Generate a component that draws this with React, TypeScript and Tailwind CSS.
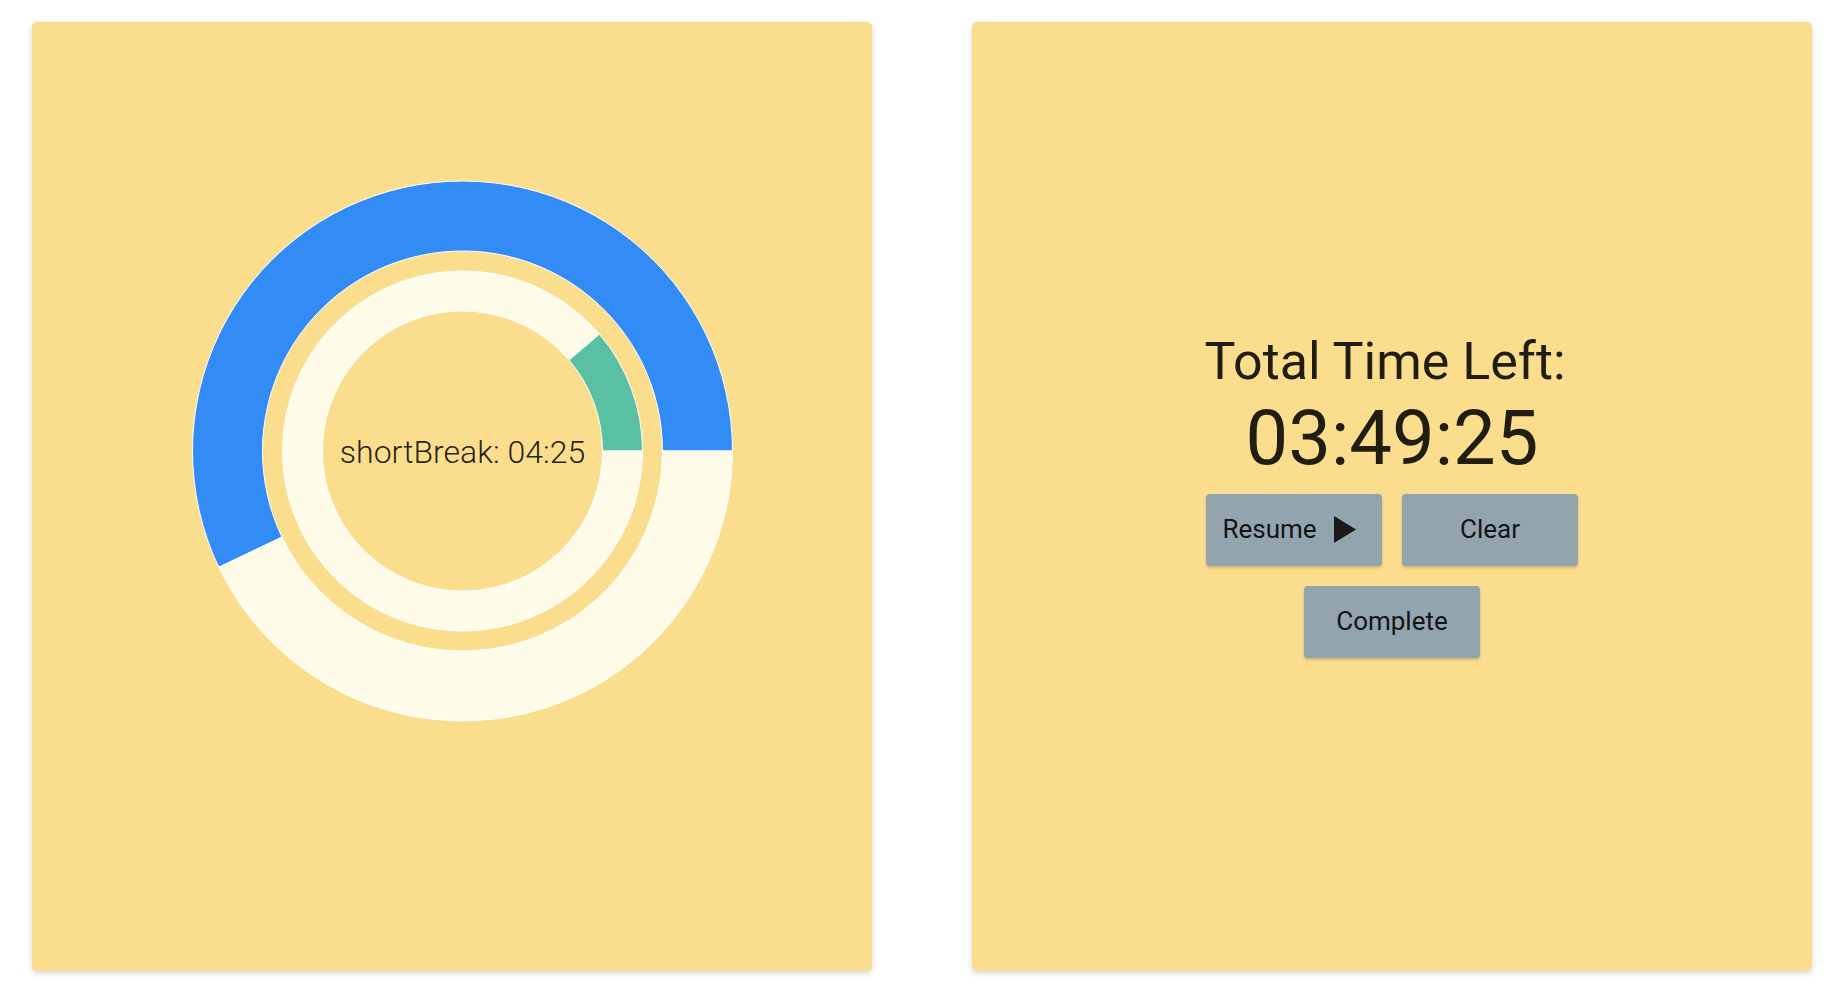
import React from 'react';

const CX = 430.5;
const CY = 429;

// annulus sector, angles in degrees counter-clockwise from 3 o'clock
function sectorPath(r0: number, r1: number, a0: number, a1: number) {
  const rad = (a: number) => (a * Math.PI) / 180;
  const pt = (r: number, a: number) => [CX + r * Math.cos(rad(a)), CY - r * Math.sin(rad(a))];
  const large = a1 - a0 > 180 ? 1 : 0;
  const [x1, y1] = pt(r1, a0);
  const [x2, y2] = pt(r1, a1);
  const [x3, y3] = pt(r0, a1);
  const [x4, y4] = pt(r0, a0);
  return `M${x1},${y1} A${r1},${r1} 0 ${large} 0 ${x2},${y2} L${x3},${y3} A${r0},${r0} 0 ${large} 1 ${x4},${y4} Z`;
}

const rings = [
  { r0: 200, r1: 270, slices: [{ from: 0, to: 205.5, fill: '#338bf6' }, { from: 205.5, to: 360, fill: '#fffbe9' }] },
  { r0: 140, r1: 180, slices: [{ from: 0, to: 40.5, fill: '#5ac0a3' }, { from: 40.5, to: 360, fill: '#fffbe9' }] },
];

function TimerChart() {
  return (
    <svg width={840} height={860} className="block">
      {rings.map((ring, i) =>
        ring.slices.map((s, j) => (
          <path
            key={`${i}-${j}`}
            d={sectorPath(ring.r0, ring.r1, s.from, s.to - 0.001)}
            fill={s.fill}
            stroke="#fff"
            strokeWidth={1}
          />
        ))
      )}
      <text
        x={CX}
        y={CY + 12}
        textAnchor="middle"
        fontSize={32}
        fontWeight={300}
        fill="rgba(0,0,0,0.87)"
        style={{ fontFamily: 'Roboto, sans-serif' }}
      >
        shortBreak: 04:25
      </text>
    </svg>
  );
}

function Btn({ children, className = '' }: { children: React.ReactNode; className?: string }) {
  return (
    <button
      className={`w-[176px] h-[72px] rounded-[4px] bg-[#92a4ad] text-[26px] text-black/[0.9] flex items-center justify-center shadow-[0_2px_3px_rgba(0,0,0,0.18)] ${className}`}
    >
      {children}
    </button>
  );
}

export default function App() {
  return (
    <div className="min-h-[994px] bg-white font-['Roboto',sans-serif] pl-[32px] pt-[22px] flex gap-[100px]">
      <div className="w-[840px] h-[949px] rounded-[5px] bg-[#fbdd8e] shadow-[0_2px_6px_rgba(0,0,0,0.16)]">
        <TimerChart />
      </div>
      <div className="w-[840px] h-[949px] pb-[4px] rounded-[5px] bg-[#fbdd8e] shadow-[0_2px_6px_rgba(0,0,0,0.16)] flex flex-col items-center justify-center text-black/[0.87]">
        <div className="text-[52px] leading-[60px] mr-[14px]">Total Time Left:</div>
        <div className="text-[76px] leading-[92px]">03:49:25</div>
        <div className="flex gap-[20px] mt-[10px]">
          <Btn className="pr-[10px]">
            <span>Resume</span>
            <svg width="22" height="27" viewBox="0 0 22 27" className="ml-[17px]">
              <path d="M0 0 L22 13.5 L0 27 Z" fill="#1a1a1a" />
            </svg>
          </Btn>
          <Btn>Clear</Btn>
        </div>
        <Btn className="mt-[20px]">Complete</Btn>
      </div>
    </div>
  );
}
